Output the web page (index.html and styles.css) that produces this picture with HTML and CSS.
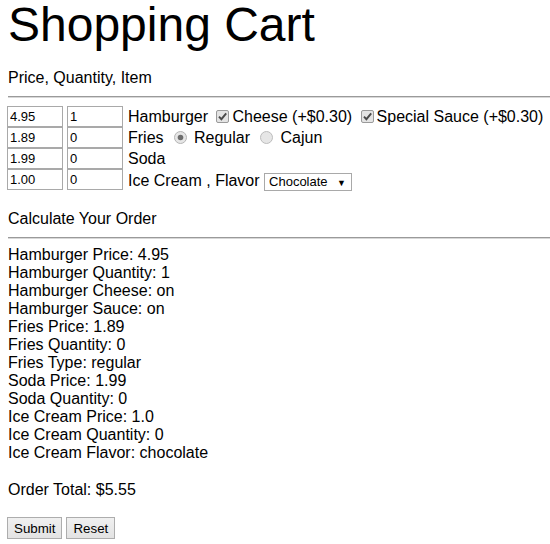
FILE: index.html
```html
<!DOCTYPE html>
<html>
<head>
<meta charset="utf-8">
<title>Shopping Cart</title>
<link rel="stylesheet" href="styles.css">
</head>
<body>
<div class="page">
  <h1 class="title">Shopping Cart</h1>
  <p class="section">Price, Quantity, Item</p>
  <hr class="rule">
  <form class="cart">
    <div class="row">
      <input class="field" type="text" value="4.95"><input class="field" type="text" value="1">
      <span class="item">Hamburger <span class="check"><svg viewBox="0 0 13 13" width="13" height="13"><rect x="0.5" y="0.5" width="12" height="12" rx="1.5" fill="#e4e4e4" stroke="#9a9a9a"/><path d="M3 6.6 L5.4 9.2 L10.2 3.4" fill="none" stroke="#4a4a4a" stroke-width="1.9"/></svg></span>Cheese (+$0.30) <span class="check"><svg viewBox="0 0 13 13" width="13" height="13"><rect x="0.5" y="0.5" width="12" height="12" rx="1.5" fill="#e4e4e4" stroke="#9a9a9a"/><path d="M3 6.6 L5.4 9.2 L10.2 3.4" fill="none" stroke="#4a4a4a" stroke-width="1.9"/></svg></span>Special Sauce (+$0.30)</span>
    </div>
    <div class="row">
      <input class="field" type="text" value="1.89"><input class="field" type="text" value="0">
      <span class="item">Fries <span class="radio"><svg viewBox="0 0 13 13" width="13" height="13"><circle cx="6.5" cy="6.5" r="6" fill="#e6e6e6" stroke="#b4b4b4"/><circle cx="6.5" cy="6.5" r="2.8" fill="#6e6e6e"/></svg></span>Regular <span class="radio"><svg viewBox="0 0 13 13" width="13" height="13"><circle cx="6.5" cy="6.5" r="6" fill="#e6e6e6" stroke="#bcbcbc"/></svg></span>Cajun</span>
    </div>
    <div class="row">
      <input class="field" type="text" value="1.99"><input class="field" type="text" value="0">
      <span class="item">Soda</span>
    </div>
    <div class="row">
      <input class="field" type="text" value="1.00"><input class="field" type="text" value="0">
      <span class="item item-select">Ice Cream , Flavor <span class="select"><span class="select-text">Chocolate</span><span class="select-arrow">▼</span></span></span>
    </div>
  </form>
  <p class="section section-calc">Calculate Your Order</p>
  <hr class="rule">
  <div class="results">
    <div>Hamburger Price: 4.95</div>
    <div>Hamburger Quantity: 1</div>
    <div>Hamburger Cheese: on</div>
    <div>Hamburger Sauce: on</div>
    <div>Fries Price: 1.89</div>
    <div>Fries Quantity: 0</div>
    <div>Fries Type: regular</div>
    <div>Soda Price: 1.99</div>
    <div>Soda Quantity: 0</div>
    <div>Ice Cream Price: 1.0</div>
    <div>Ice Cream Quantity: 0</div>
    <div>Ice Cream Flavor: chocolate</div>
  </div>
  <p class="total">Order Total: $5.55</p>
  <div class="buttons">
    <button class="btn" type="button">Submit</button>
    <button class="btn" type="button">Reset</button>
  </div>
</div>
</body>
</html>
```

FILE: styles.css
```css
html, body {
  margin: 0;
  padding: 0;
  background: #fff;
}
body {
  font-family: "Liberation Sans", Arial, sans-serif;
  font-size: 16px;
  line-height: 18px;
  color: #000;
}
.page {
  padding: 1px 0 0 8px;
}
.title {
  margin: 0;
  font-size: 48px;
  line-height: 48px;
  font-weight: normal;
}
.section {
  margin: 20px 0 0 0;
}
.section-calc {
  margin-top: 20px;
}
.rule {
  margin: 9px 0 0 0;
  border: 0;
  border-top: 1px solid #9a9a9a;
  border-bottom: 1px solid #d8d8d8;
  height: 0;
}
.cart {
  margin: 8px 0 0 0;
  display: flex;
  flex-direction: column;
}
.row {
  display: flex;
  align-items: center;
  height: 21px;
  margin-left: -1px;
}
.field {
  box-sizing: border-box;
  width: 56px;
  height: 21px;
  margin: 0 4px 0 0;
  padding: 0 2px;
  border: 1px solid #a9a9a9;
  font-family: "Liberation Sans", Arial, sans-serif;
  font-size: 13px;
  color: #000;
  background: #fff;
}
.item {
  margin-left: 1px;
  white-space: pre;
}
.item-select {
  margin-top: 4px;
}
.check {
  display: inline-block;
  width: 13px;
  height: 13px;
  margin: 0 3px 0 4px;
  vertical-align: -1px;
}
.radio {
  display: inline-block;
  width: 13px;
  height: 13px;
  margin: 0 7px 0 6px;
  vertical-align: -1px;
}
.check svg, .radio svg {
  display: block;
}
.select {
  display: inline-flex;
  align-items: baseline;
  justify-content: space-between;
  box-sizing: border-box;
  width: 88px;
  height: 18px;
  padding: 0 5px 0 4px;
  border: 1px solid #a9a9a9;
  background: #fff;
  font-size: 13px;
  line-height: 16px;
  vertical-align: baseline;
  margin-left: 0;
}
.select-arrow {
  font-size: 9px;
}
.results {
  margin-top: 7px;
}
.total {
  margin: 19px 0 0 0;
}
.buttons {
  margin-top: 18px;
  display: flex;
  gap: 4px;
  margin-left: -1px;
}
.btn {
  box-sizing: border-box;
  height: 22px;
  padding: 0 6px;
  border: 1px solid #adadad;
  background: linear-gradient(#f0f0f0, #e3e3e3);
  font-family: "Liberation Sans", Arial, sans-serif;
  font-size: 13.33px;
  color: #000;
  border-radius: 0;
}
```
